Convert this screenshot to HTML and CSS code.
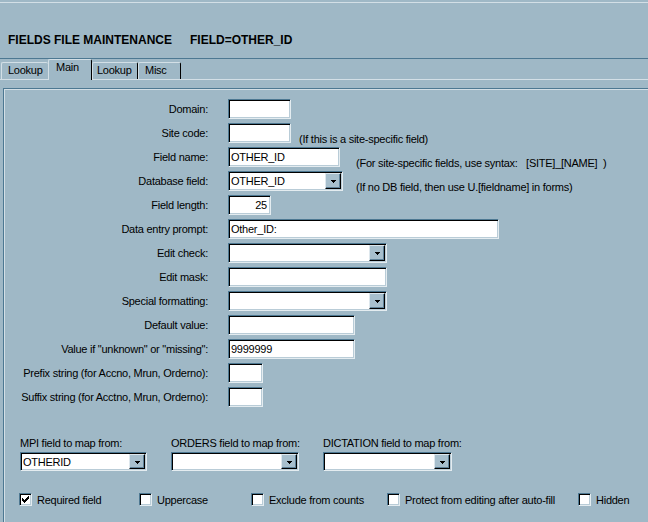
FILE: index.html
```html
<!DOCTYPE html>
<html>
<head>
<meta charset="utf-8">
<title>Fields File Maintenance</title>
<link rel="stylesheet" href="styles.css">
</head>
<body>
<div class="window">
  <div class="header">
    <h1 class="title"><span>FIELDS FILE MAINTENANCE</span><span class="title-field">FIELD=OTHER_ID</span></h1>
  </div>
  <div class="tabs">
    <div class="tab tab-lookup">Lookup</div>
    <div class="tab tab-main tab-active">Main</div>
    <div class="tab tab-lookup2">Lookup</div>
    <div class="tab tab-misc">Misc</div>
  </div>
  <div class="panel">
    <div class="form">
      <div class="row"><span class="lbl">Domain:</span><div class="field w63"></div></div>
      <div class="row"><span class="lbl">Site code:</span><div class="field w63"></div><span class="help help-site">(If this is a site-specific field)</span></div>
      <div class="row"><span class="lbl">Field name:</span><div class="field w112">OTHER_ID</div><span class="help help-name">(For site-specific fields, use syntax:   [SITE]_[NAME]  )</span></div>
      <div class="row"><span class="lbl">Database field:</span><div class="field select w115"><span class="val">OTHER_ID</span><span class="drop"><svg width="5" height="3" viewBox="0 0 5 3" shape-rendering="crispEdges"><path d="M0 0h5v1h-1v1h-1v1h-1v-1h-1v-1h-1z"/></svg></span></div><span class="help help-db">(If no DB field, then use U.[fieldname] in forms)</span></div>
      <div class="row"><span class="lbl">Field length:</span><div class="field w43 num">25</div></div>
      <div class="row"><span class="lbl">Data entry prompt:</span><div class="field w271">Other_ID:</div></div>
      <div class="row"><span class="lbl">Edit check:</span><div class="field select w159"><span class="val"></span><span class="drop"><svg width="5" height="3" viewBox="0 0 5 3" shape-rendering="crispEdges"><path d="M0 0h5v1h-1v1h-1v1h-1v-1h-1v-1h-1z"/></svg></span></div></div>
      <div class="row"><span class="lbl">Edit mask:</span><div class="field w159"></div></div>
      <div class="row"><span class="lbl">Special formatting:</span><div class="field select w159"><span class="val"></span><span class="drop"><svg width="5" height="3" viewBox="0 0 5 3" shape-rendering="crispEdges"><path d="M0 0h5v1h-1v1h-1v1h-1v-1h-1v-1h-1z"/></svg></span></div></div>
      <div class="row"><span class="lbl">Default value:</span><div class="field w127"></div></div>
      <div class="row"><span class="lbl">Value if "unknown" or "missing":</span><div class="field w127">9999999</div></div>
      <div class="row"><span class="lbl">Prefix string (for Accno, Mrun, Orderno):</span><div class="field w35"></div></div>
      <div class="row"><span class="lbl">Suffix string (for Acctno, Mrun, Orderno):</span><div class="field w35"></div></div>
    </div>

    <div class="maps">
      <div class="map">
        <span class="map-lbl">MPI field to map from:</span>
        <div class="field select short w127"><span class="val">OTHERID</span><span class="drop"><svg width="5" height="3" viewBox="0 0 5 3" shape-rendering="crispEdges"><path d="M0 0h5v1h-1v1h-1v1h-1v-1h-1v-1h-1z"/></svg></span></div>
      </div>
      <div class="map">
        <span class="map-lbl">ORDERS field to map from:</span>
        <div class="field select short w128"><span class="val"></span><span class="drop"><svg width="5" height="3" viewBox="0 0 5 3" shape-rendering="crispEdges"><path d="M0 0h5v1h-1v1h-1v1h-1v-1h-1v-1h-1z"/></svg></span></div>
      </div>
      <div class="map">
        <span class="map-lbl">DICTATION field to map from:</span>
        <div class="field select short w129"><span class="val"></span><span class="drop"><svg width="5" height="3" viewBox="0 0 5 3" shape-rendering="crispEdges"><path d="M0 0h5v1h-1v1h-1v1h-1v-1h-1v-1h-1z"/></svg></span></div>
      </div>
    </div>

    <div class="checks">
      <div class="check"><span class="box"><svg width="7" height="7" viewBox="0 0 7 7" shape-rendering="crispEdges"><path d="M0 2h1v3h-1zM1 3h1v3h-1zM2 4h1v3h-1zM3 3h1v3h-1zM4 2h1v3h-1zM5 1h1v3h-1zM6 0h1v3h-1z"/></svg></span><span>Required field</span></div>
      <div class="check"><span class="box"></span><span>Uppercase</span></div>
      <div class="check"><span class="box"></span><span>Exclude from counts</span></div>
      <div class="check"><span class="box"></span><span>Protect from editing after auto-fill</span></div>
      <div class="check"><span class="box"></span><span>Hidden</span></div>
    </div>
  </div>
</div>
</body>
</html>
```

FILE: styles.css
```css
html, body {
  margin: 0;
  padding: 0;
  overflow: hidden;
  background: #9fb8c6;
}

body {
  font-family: "Liberation Sans", Arial, sans-serif;
  font-size: 11px;
  letter-spacing: -0.25px;
  color: #000;
  width: 648px;
  height: 522px;
}

.window {
  padding-top: 2px;
}

.header {
  border-top: 1px solid #d3dfe6;
  border-bottom: 1px solid #4d7892;
  height: 55px;
  box-sizing: content-box;
}

.title {
  margin: 0;
  padding: 30px 0 0 8px;
  font-size: 12px;
  line-height: 14px;
  font-weight: bold;
  letter-spacing: 0;
}

.title-field {
  margin-left: 18px;
}

.tabs {
  display: flex;
  align-items: flex-end;
  height: 20px;
  border-bottom: 1px solid #d3dfe6;
  padding-left: 1px;
}

.tab {
  box-sizing: border-box;
  height: 17px;
  line-height: 15px;
  padding-left: 6px;
  border-top: 1px solid #d3dfe6;
  border-left: 1px solid #d3dfe6;
  border-right: 1px solid #000;
  border-radius: 2px 2px 0 0;
  white-space: nowrap;
}

.tab-lookup { width: 47px; border-right: none; }
.tab-main { width: 44px; padding-left: 7px; }
.tab-lookup2 { width: 46px; padding-left: 4px; }
.tab-misc { width: 43px; padding-left: 6px; }

.tab-active {
  height: 21px;
  margin-bottom: -1px;
  line-height: 14px;
  background: #9fb8c6;
  position: relative;
  z-index: 1;
}

.panel {
  box-sizing: border-box;
  height: 434px;
  margin-top: 8px;
  margin-left: 3px;
  margin-right: -10px;
  border-top: 1px solid #4d7892;
  border-left: 1px solid #4d7892;
  box-shadow: inset 1px 1px 0 #d3dfe6;
  padding-top: 10px;
  overflow: hidden;
}

.form {
  display: flex;
  flex-direction: column;
  gap: 4px;
}

.row {
  display: flex;
  align-items: center;
  height: 20px;
}

.lbl {
  flex: none;
  width: 204px;
  margin-right: 20px;
  text-align: right;
  white-space: nowrap;
}

.field {
  flex: none;
  box-sizing: border-box;
  height: 20px;
  background: #fff;
  border-top: 1px solid #4d7892;
  border-left: 1px solid #4d7892;
  border-right: 1px solid #e4ecf0;
  border-bottom: 1px solid #e4ecf0;
  box-shadow: inset 1px 1px 0 #000, inset -1px -1px 0 #b9ccd7;
  padding: 0 2px 0 2px;
  line-height: 18px;
  white-space: nowrap;
  overflow: hidden;
}

.num { text-align: right; padding-right: 3px; }

.w35 { width: 35px; }
.w43 { width: 43px; }
.w63 { width: 63px; }
.w112 { width: 112px; }
.w115 { width: 115px; }
.w127 { width: 127px; }
.w128 { width: 128px; }
.w129 { width: 129px; }
.w159 { width: 159px; }
.w271 { width: 271px; }

.select {
  display: flex;
  align-items: stretch;
  padding: 1px 1px 1px 2px;
  line-height: 16px;
}

.select .val {
  flex: 1;
}

.drop {
  flex: none;
  box-sizing: border-box;
  width: 16px;
  background: #a7bfcd;
  border-top: 1px solid #dde7ed;
  border-left: 1px solid #dde7ed;
  border-right: 1px solid #000;
  border-bottom: 1px solid #000;
  box-shadow: inset -1px -1px 0 #5d8198;
  display: flex;
  align-items: center;
  justify-content: center;
}

.drop svg {
  display: block;
  fill: #000;
  margin-top: 1px;
}

.help {
  flex: none;
  align-self: flex-end;
  line-height: 14px;
  margin-bottom: -3px;
  white-space: pre;
}

.help-site { margin-left: 8px; }
.help-name { margin-left: 16px; }
.help-db { margin-left: 13px; }

.maps {
  display: grid;
  grid-template-columns: 151px 152px 1fr;
  margin-top: 30px;
  padding-left: 16px;
}

.map {
  display: flex;
  flex-direction: column;
  align-items: flex-start;
  gap: 2px;
}

.map-lbl {
  line-height: 13px;
  white-space: nowrap;
}

.short {
  height: 19px;
}

.checks {
  display: grid;
  grid-template-columns: 120px 112px 136px 191px auto;
  margin-top: 22px;
  padding-left: 15px;
}

.check {
  display: flex;
  align-items: center;
  gap: 5px;
  height: 13px;
  white-space: nowrap;
}

.box {
  flex: none;
  box-sizing: border-box;
  width: 13px;
  height: 13px;
  background: #fff;
  border-top: 1px solid #4d7892;
  border-left: 1px solid #4d7892;
  border-right: 1px solid #e4ecf0;
  border-bottom: 1px solid #e4ecf0;
  box-shadow: inset 1px 1px 0 #000, inset -1px -1px 0 #b9ccd7;
  display: flex;
  align-items: center;
  justify-content: center;
}

.box svg {
  display: block;
  fill: #000;
}
```
